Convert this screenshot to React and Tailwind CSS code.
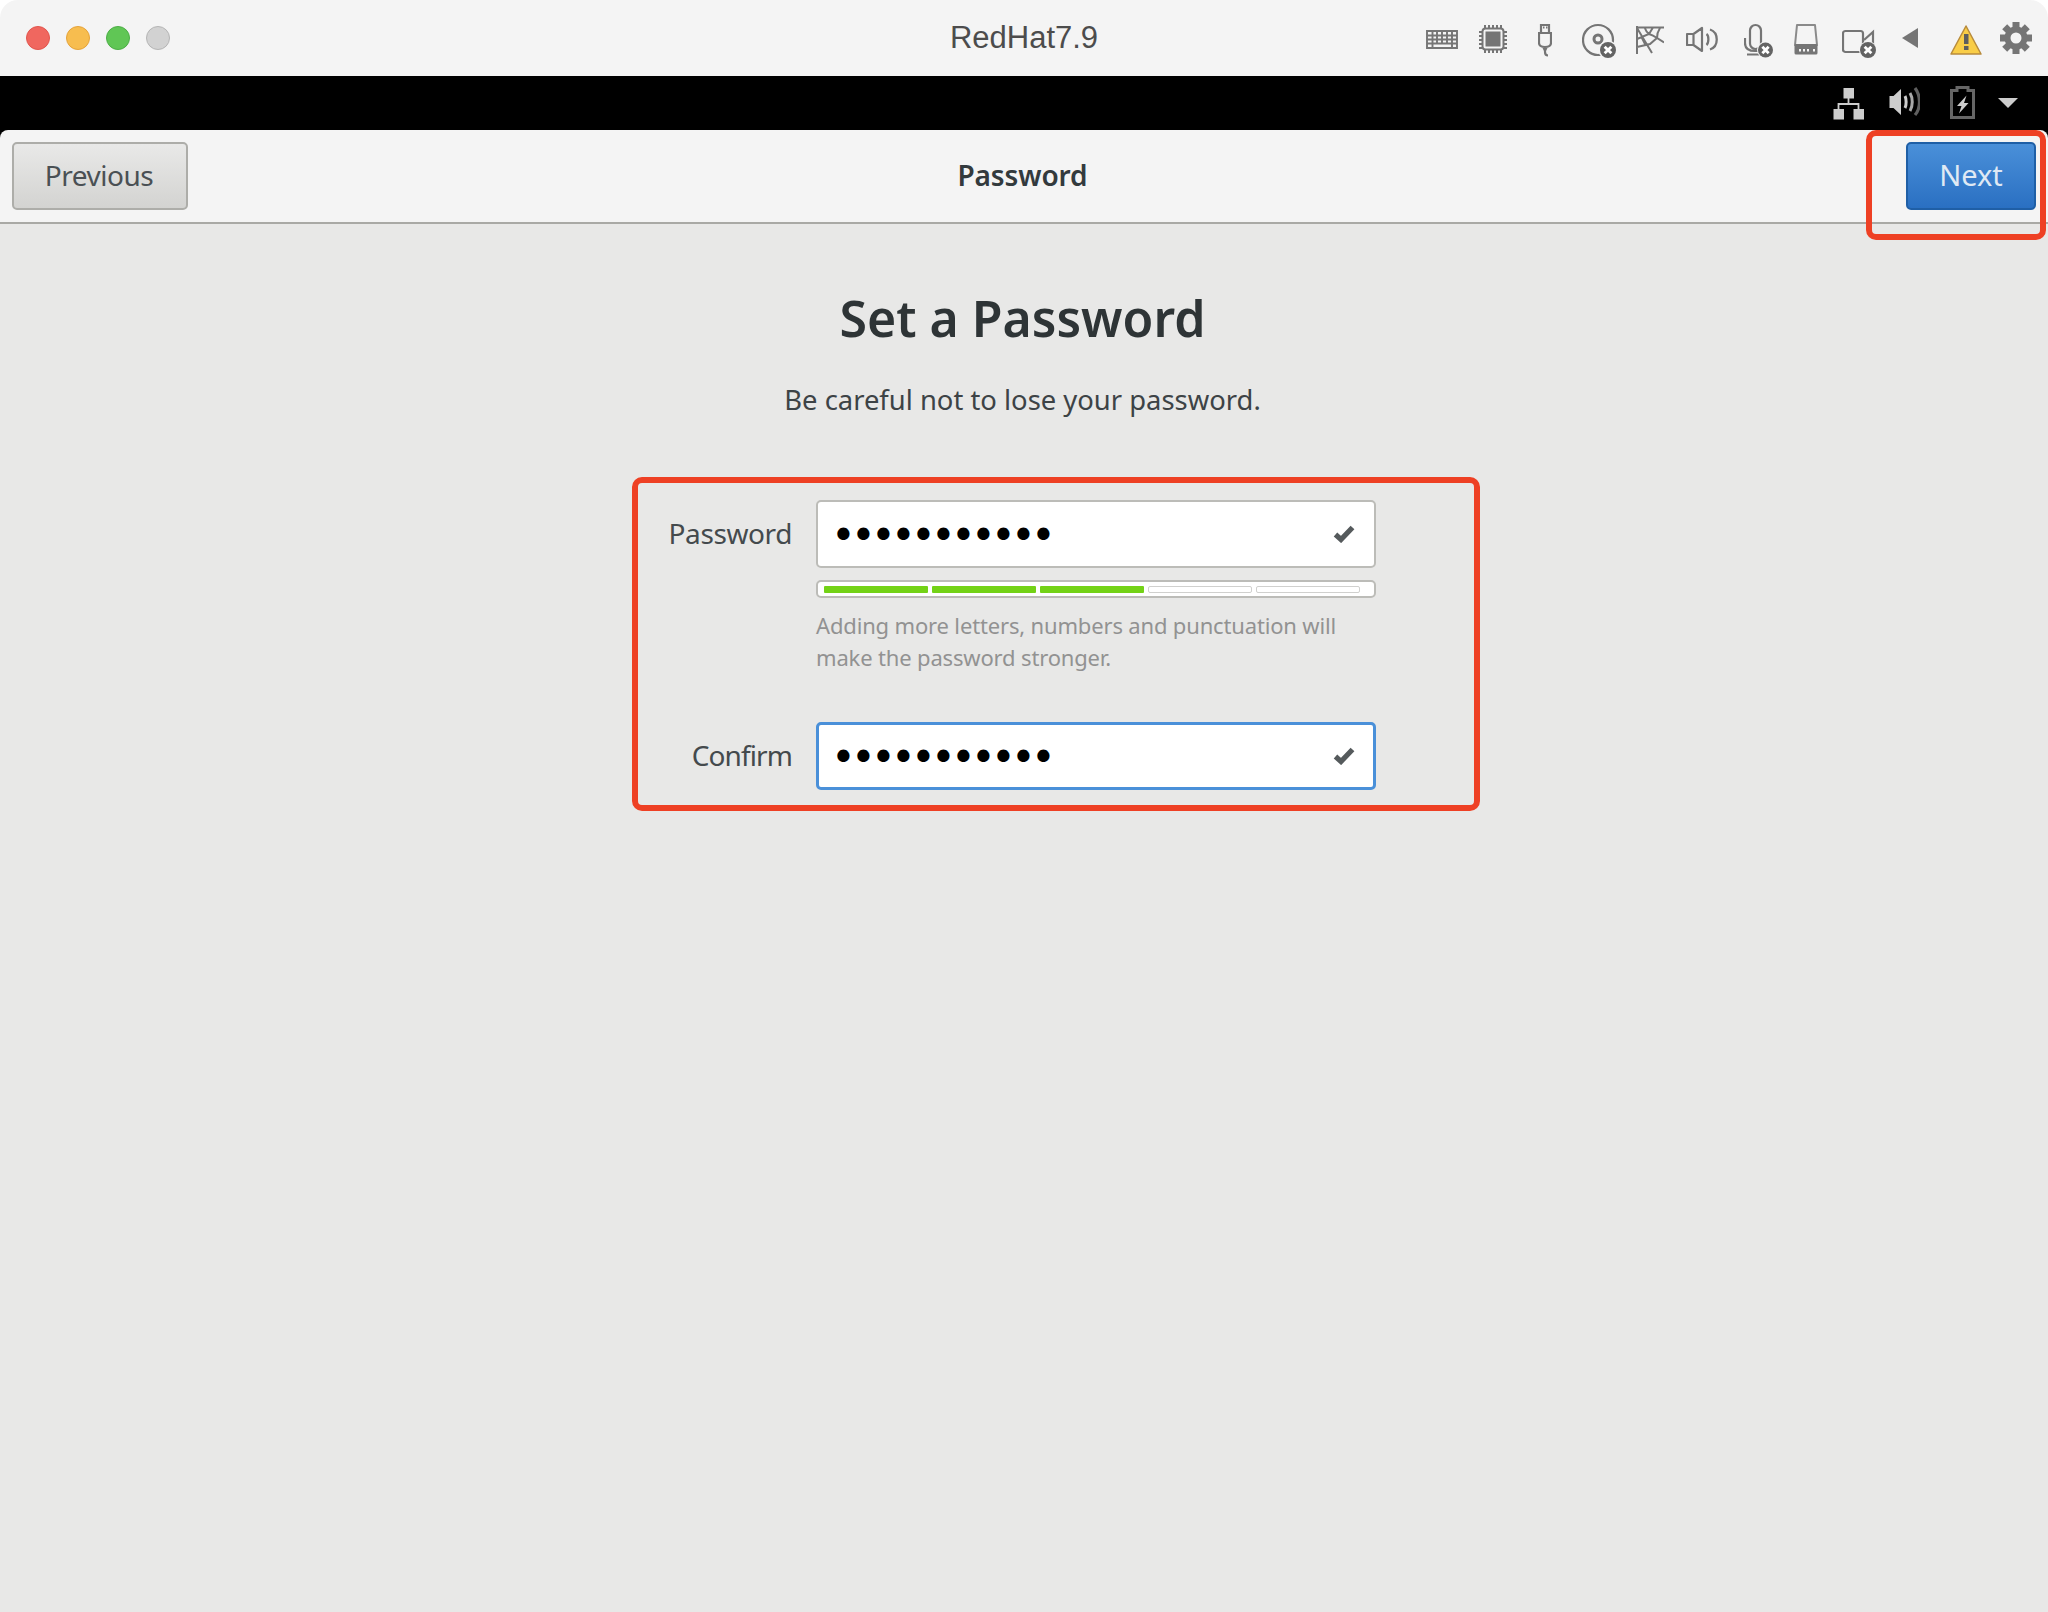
import React from "react";

const G = "#757575";

function Badge({ cx, cy, r = 8 }) {
  const d = r * 0.42;
  return (
    <g>
      <circle cx={cx} cy={cy} r={r} fill="#636363" />
      <path d={`M${cx - d} ${cy - d}L${cx + d} ${cy + d}M${cx + d} ${cy - d}L${cx - d} ${cy + d}`} stroke="#fff" strokeWidth="2.8" fill="none" />
    </g>
  );
}

function Ico({ w, h = 40, className = "", children }) {
  return (
    <svg width={w} height={h} viewBox={`0 0 ${w} ${h}`} className={`shrink-0 ${className}`} fill="none">
      {children}
    </svg>
  );
}

function Keyboard({ className }) {
  return (
    <Ico w={32} className={className}>
      <path d="M1 13h30v17H1zM1 17.500h30M1 21.500h30M1 25.500h30M6.500 13v12.500M11 13v12.500M16 13v12.500M21 13v12.500M26 13v12.500M6.500 25.500v4.500M26 25.500v4.500" stroke={G} strokeWidth="1.900" />
    </Ico>
  );
}

function Chip({ className }) {
  const pins = [6, 10, 14, 18, 22];
  return (
    <Ico w={28} className={className}>
      <rect x="3.500" y="10.500" width="21" height="21" rx="3" stroke={G} strokeWidth="2" />
      <rect x="6.500" y="13.500" width="15" height="15" fill={G} />
      {pins.map((p) => (
        <g key={p} fill={G}>
          <rect x={p - 1} y="7" width="2" height="3" />
          <rect x={p - 1} y="32" width="2" height="3" />
          <rect x="0" y={p + 7} width="3" height="2" />
          <rect x="25" y={p + 7} width="3" height="2" />
        </g>
      ))}
    </Ico>
  );
}

function Usb({ className }) {
  return (
    <Ico w={14} className={className}>
      <path d="M3 15V7h8v8M1 15h12v10c0 2-2 4-6 4s-6-2-6-4zM7 29v5c0 2 1 3.500 3 3.500" stroke={G} strokeWidth="2.200" />
      <path d="M5 9.500h1.500M8 9.500h1.500" stroke={G} strokeWidth="2" />
      <path d="M4.500 30l2.500 5 2.500-5z" fill={G} />
    </Ico>
  );
}

function Disc({ className }) {
  return (
    <Ico w={34} className={className}>
      <circle cx="16" cy="22" r="15" stroke={G} strokeWidth="2.200" />
      <circle cx="16" cy="21" r="4" stroke={G} strokeWidth="3" />
      <circle cx="26" cy="32" r="9.500" fill="#f4f4f4" />
      <Badge cx={26} cy={32} />
    </Ico>
  );
}

function Web({ className }) {
  return (
    <Ico w={28} className={className}>
      <path d="M1 8v28M0 9.500h28M1 10l15 25M1 21l12-5 4-6.500M1 29l13-3 7-6 7 4.500M9 10c1 3 1 4 4 6 3 1 5 2 8 4 0-4 1-7 3-10M5 18l4 8" stroke={G} strokeWidth="2" />
    </Ico>
  );
}

function Speaker({ className }) {
  return (
    <Ico w={32} className={className}>
      <path d="M1 16h6.500v11H1zM7.500 16L16 10v23l-8.500-6z" stroke={G} strokeWidth="2.200" strokeLinejoin="round" />
      <path d="M20.500 16c2.500 1.500 2.500 9 0 11M24 11.500c9 3 9 17 0 20" stroke={G} strokeWidth="2.300" />
    </Ico>
  );
}

function Mic({ className }) {
  return (
    <Ico w={29} className={className}>
      <rect x="6" y="7" width="11" height="24" rx="5.500" stroke={G} strokeWidth="2.200" />
      <path d="M1 20v5c0 6 5 8 10 8h4M3 36.500h16" stroke={G} strokeWidth="2.200" />
      <circle cx="21.500" cy="32" r="8.500" fill="#f4f4f4" />
      <Badge cx={21.500} cy={32} r={7.500} />
    </Ico>
  );
}

function Hdd({ className }) {
  return (
    <Ico w={24} className={className}>
      <path d="M3 7h18l2 20H1z" stroke="#8a8a8a" strokeWidth="2" strokeLinejoin="round" />
      <rect x="0.500" y="26" width="23" height="10.500" rx="1.500" fill={G} />
      <path d="M5 31h2v2.500H5zM9 31h2v2.500H9zM13 31h2v2.500h-2zM19 31h2v2.500h-2z" fill="#f4f4f4" />
    </Ico>
  );
}

function Cam({ className }) {
  return (
    <Ico w={34} className={className}>
      <rect x="1" y="13" width="20" height="21" rx="2.500" stroke={G} strokeWidth="2.200" />
      <path d="M22 22l9-8v18" stroke={G} strokeWidth="2.200" />
      <circle cx="26" cy="32" r="9" fill="#f4f4f4" />
      <Badge cx={26} cy={32} />
    </Ico>
  );
}

function Arrow({ className }) {
  return (
    <Ico w={16} className={className}>
      <path d="M0 20L16 10V30z" fill={G} />
    </Ico>
  );
}

function Warn({ className }) {
  return (
    <Ico w={32} className={className}>
      <path d="M16 8L31 36H1z" fill="#f9cd47" stroke="#b88b3c" strokeWidth="1.500" strokeLinejoin="round" />
      <rect x="14" y="16" width="4.500" height="10" fill="#5e5e5e" />
      <rect x="14" y="28" width="4.500" height="4" fill="#5e5e5e" />
    </Ico>
  );
}

function Gear({ className }) {
  const a = [0, 45, 90, 135, 180, 225, 270, 315];
  return (
    <Ico w={32} className={className}>
      <circle cx="16" cy="20" r="8.500" stroke={G} strokeWidth="6" />
      {a.map((r) => (
        <rect key={r} x="12.500" y="4" width="7" height="7" fill={G} transform={`rotate(${r} 16 20)`} />
      ))}
    </Ico>
  );
}

function Net({ className }) {
  const c = "#cdcdcd";
  return (
    <Ico w={31} className={className}>
      <rect x="10.500" y="5" width="10.500" height="10.500" fill={c} />
      <rect x="0.500" y="26" width="10.500" height="10.500" fill={c} />
      <rect x="20.500" y="26" width="10.500" height="10.500" fill={c} />
      <path d="M15.500 15v6M5.500 26v-5h20v5" stroke={c} strokeWidth="1.800" />
    </Ico>
  );
}

function Vol({ className }) {
  return (
    <Ico w={31} className={className}>
      <path d="M0.500 13h4L12 6v26l-7.500-7h-4z" fill="#cdcdcd" />
      <path d="M16 13c1.500 3 1.500 9 0 12" stroke="#cdcdcd" strokeWidth="3" />
      <path d="M21 10c3 5 3 13 0 18" stroke="#a8a8a8" strokeWidth="3" />
      <path d="M26 5c6 8 6 20 0 27" stroke="#5f5f5f" strokeWidth="3.200" />
    </Ico>
  );
}

function Batt({ className }) {
  return (
    <Ico w={25} className={className}>
      <path d="M7 4.500h11v3h5.500v27H1.500v-27H7z" stroke="#666" strokeWidth="3" />
      <path d="M16.500 12.500L7 23h4.500L9 30.500 18.500 20H14z" fill="#cdcdcd" />
    </Ico>
  );
}

function Tri({ className }) {
  return (
    <Ico w={20} className={className}>
      <path d="M0 15h20L10 25z" fill="#cdcdcd" />
    </Ico>
  );
}

function Check() {
  return (
    <svg width="22" height="18" viewBox="0 0 22 18" className="shrink-0" fill="none">
      <path d="M2.500 9.500L8 14.500L19.500 2.500" stroke="#555a5c" strokeWidth="5.200" />
    </svg>
  );
}

function Entry({ focused }) {
  return (
    <div
      className={`flex h-[68px] items-center justify-between rounded-[5px] bg-white ${
        focused ? "border-[3px] border-[#4a90d9] pl-[12px] pr-[18px]" : "border-2 border-[#bcbcb8] pl-[13px] pr-[19px]"
      }`}
    >
      <span className="pt-[4px] font-['DejaVu_Sans',sans-serif] text-[42px] leading-none tracking-[-4.78px] text-black">•••••••••••</span>
      <Check />
    </div>
  );
}

export default function App() {
  const seg = "h-[7px] w-[104px] rounded-[1px]";
  const empty = "h-[7px] w-[104px] rounded-[2px] border border-[#d0d0ce] bg-white";
  return (
    <div className="relative flex h-[1612px] w-[2048px] flex-col overflow-hidden bg-white font-['Noto_Sans',sans-serif]">
      <div className="grid h-[76px] shrink-0 grid-cols-[1fr_auto_1fr] items-center rounded-t-[18px] bg-[#f4f4f4]">
        <div className="flex items-center gap-4 pl-[26px]">
          <span className="h-6 w-6 rounded-full border border-[#e2554d] bg-[#f0675f]" />
          <span className="h-6 w-6 rounded-full border border-[#e5a33a] bg-[#f7bd4f]" />
          <span className="h-6 w-6 rounded-full border border-[#4cae46] bg-[#60c655]" />
          <span className="h-6 w-6 rounded-full border border-[#b5b5b5] bg-[#d2d2d2]" />
        </div>
        <div className="pb-[2px] font-['Liberation_Sans',sans-serif] text-[31px] leading-none text-[#4c4c4c]">RedHat7.9</div>
        <div className="flex items-center justify-end pr-4">
          <Keyboard />
          <Chip className="ml-[21px]" />
          <Usb className="ml-[31px]" />
          <Disc className="ml-[30px]" />
          <Web className="ml-[20px]" />
          <Speaker className="ml-[22px]" />
          <Mic className="ml-[26px]" />
          <Hdd className="ml-[21px]" />
          <Cam className="ml-[24px]" />
          <Arrow className="ml-[26px]" />
          <Warn className="ml-[32px]" />
          <Gear className="ml-[18px]" />
        </div>
      </div>

      <div className="flex h-[54px] shrink-0 items-center justify-end bg-black pr-[30px]">
        <Net />
        <Vol className="ml-[25px]" />
        <Batt className="ml-[30px]" />
        <Tri className="ml-[23px]" />
      </div>

      <div className="flex flex-1 flex-col bg-black">
        <div className="relative grid h-[94px] shrink-0 grid-cols-[1fr_auto_1fr] items-start rounded-t-[8px] border-b-2 border-[#a9a9a5] bg-[#f4f4f4] px-3 pt-3">
          <button className="flex h-[68px] w-[176px] items-center justify-center rounded-[5px] border-2 border-[#adada9] bg-gradient-to-b from-[#e9e9e8] to-[#d3d3d1] pb-[2px] pr-[2px] text-[28px] tracking-[-0.5px] text-[#4a5054]">
            Previous
          </button>
          <div className="flex h-[68px] items-center pb-[2px] pr-[3px] text-[28px] font-semibold tracking-[-0.1px] text-[#333a3d]">Password</div>
          <button className="flex h-[68px] w-[130px] items-center justify-center justify-self-end rounded-[5px] border-2 border-[#1f5fa6] bg-gradient-to-b from-[#4a90d9] to-[#2a70c2] pb-[2px] text-[29px] text-[#dfe9f4]">
            Next
          </button>
          <div className="absolute left-[1866px] top-0 h-[110px] w-[180px] rounded-[10px] border-[6px] border-[#ee4024]" />
        </div>

        <div className="flex flex-1 flex-col bg-[#e8e8e7]">
          <h1 className="mt-[61px] pr-[3px] text-center text-[50px] font-semibold leading-[66px] text-[#2e3436]">Set a Password</h1>
          <p className="mt-[30px] pr-[3px] text-center text-[27.4px] leading-[38px] text-[#3d4346]">Be careful not to lose your password.</p>
          <div className="ml-[632px] mt-[58px] w-[848px] rounded-[10px] border-[6px] border-[#ee4024] pb-[15px] pt-[17px]">
            <div className="grid grid-cols-[154px_560px] gap-x-6">
              <div className="flex h-[68px] items-center justify-end pb-[2px] text-[28px] tracking-[-0.4px] text-[#444a4d]">Password</div>
              <div>
                <Entry />
                <div className="mt-[12px] flex h-[18px] items-center gap-1 rounded-[5px] border-2 border-[#bcbcb8] bg-white pl-[6px]">
                  <div className={`${seg} bg-[#73d216]`} />
                  <div className={`${seg} bg-[#73d216]`} />
                  <div className={`${seg} bg-[#73d216]`} />
                  <div className={empty} />
                  <div className={empty} />
                </div>
                <p className="mb-[49px] mt-[11px] text-[22px] leading-[32px] tracking-[-0.16px] text-[#929292]">
                  Adding more letters, numbers and punctuation will
                  <br />
                  make the password stronger.
                </p>
              </div>
              <div className="flex h-[68px] items-center justify-end pb-[2px] text-[28px] tracking-[-0.9px] text-[#444a4d]">Confirm</div>
              <Entry focused />
            </div>
          </div>
        </div>
      </div>
    </div>
  );
}
